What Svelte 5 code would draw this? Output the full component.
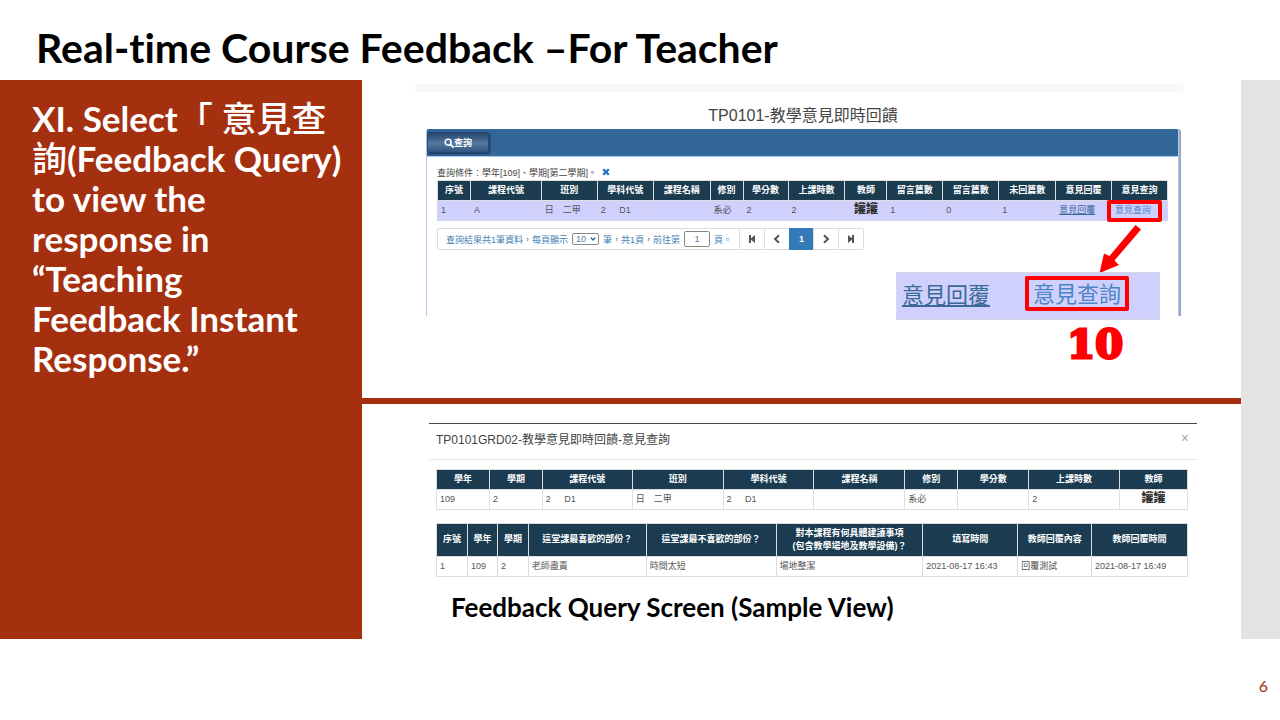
<script>
  const courseCols = [33, 71, 56, 56, 57, 33, 45, 57, 42, 56, 56, 57, 56, 56];
  const courseHeads = ['序號', '課程代號', '班別', '學科代號', '課程名稱', '修別', '學分數', '上課時數', '教師', '留言篇數', '留言篇數', '未回篇數', '意見回覆', '意見查詢'];
  const courseRow = ['1', 'A', '日\u3000二甲', '2\u2003\u2002D1', '', '系必', '2', '2', '讙讙', '1', '0', '1'];

  const detailCols = [53, 53, 90, 91, 91, 91, 53, 71, 91, 68];
  const detailHeads = ['學年', '學期', '課程代號', '班別', '學科代號', '課程名稱', '修別', '學分數', '上課時數', '教師'];
  const detailRow = ['109', '2', '2\u2003\u2002D1', '日\u3000二甲', '2\u2003\u2002D1', '', '系必', '', '2', '讙讙'];

  const replyCols = [31, 30, 31, 118, 130, 147, 95, 74, 96];
  const replyHeads = ['序號', '學年', '學期', '這堂課最喜歡的部份？', '這堂課最不喜歡的部份？', '對本課程有何具體建議事項\n(包含教學場地及教學設備)？', '填寫時間', '教師回覆內容', '教師回覆時間'];
  const replyRow = ['1', '109', '2', '老師盡責', '時間太短', '場地整潔', '2021-08-17 16:43', '回覆測試', '2021-08-17 16:49'];

  const total = (cols) => cols.reduce((a, b) => a + b, 0);
  let pageSize = $state('10');
  let pageNumber = $state('1');
</script>

{#snippet columns(cols)}
  <colgroup>
    {#each cols as w}<col style="width: {(w / total(cols)) * 100}%" />{/each}
  </colgroup>
{/snippet}

<div class="slide">
  <header><h1>Real-time Course Feedback –For Teacher</h1></header>

  <div class="body">
    <aside>
      <p>XI. Select<span>「 意見查</span><br /><span>詢</span>(Feedback Query)<br />to view the<br />response in<br />“Teaching<br />Feedback Instant<br />Response.”</p>
    </aside>

    <main>
      <section class="upper">
        <div class="strip"></div>
        <h2>TP0101-教學意見即時回饋</h2>
        <div class="panel">
          <div class="toolbar">
            <button class="query" type="button">
              <svg viewBox="0 0 12 12" width="10" height="10" aria-hidden="true"><circle cx="5" cy="5" r="3.6" fill="none" stroke="#fff" stroke-width="1.8" /><path d="M7.8 7.8 11 11" stroke="#fff" stroke-width="2.2" stroke-linecap="round" /></svg>查詢
            </button>
          </div>
          <div class="content">
            <div class="condition">
              <span>查詢條件：學年[109]、學期[第二學期]。</span>
              <button class="clear" type="button" aria-label="清除"><svg viewBox="0 0 8 8" width="8" height="8"><path d="M1.2 1.2 6.8 6.8M6.8 1.2 1.2 6.8" stroke="#1f6fb5" stroke-width="2.2" /></svg></button>
            </div>
            <table class="course">
              {@render columns(courseCols)}
              <thead><tr>{#each courseHeads as h}<th>{h}</th>{/each}</tr></thead>
              <tbody>
                <tr>
                  {#each courseRow as c}<td class:teacher={c === '讙讙'}>{c}</td>{/each}
                  <td><a class="reply" href="#reply">意見回覆</a></td>
                  <td class="marked"><a href="#query">意見查詢</a></td>
                </tr>
              </tbody>
            </table>
            <div class="pager">
              <div class="summary">
                <label>查詢結果共1筆資料，每頁顯示
                  <span class="select">
                    <select bind:value={pageSize}><option>10</option><option>20</option></select>
                    <svg viewBox="0 0 6 6" width="6" height="6" aria-hidden="true"><path class="line" d="M.8 1.600 3 4 5.200 1.600" /></svg>
                  </span></label>
                <label>筆，共1頁，前往第
                  <input type="text" bind:value={pageNumber} /></label>
                <span>頁。</span>
              </div>
              <button type="button" aria-label="第一頁"><svg viewBox="0 0 10 10" width="10" height="10"><path d="M2 1h2v3.200L8 1v8L4 5.800V9H2z" /></svg></button>
              <button type="button" aria-label="上一頁"><svg viewBox="0 0 10 10" width="10" height="10"><path class="line" d="M7 1.2 3 5l4 3.8" /></svg></button>
              <button type="button" class="current">1</button>
              <button type="button" aria-label="下一頁"><svg viewBox="0 0 10 10" width="10" height="10"><path class="line" d="M3 1.2 7 5 3 8.8" /></svg></button>
              <button type="button" aria-label="最後一頁"><svg viewBox="0 0 10 10" width="10" height="10"><path d="M8 1H6v3.200L2 1v8l4-3.200V9h2z" /></svg></button>
            </div>
          </div>
          <svg class="arrow" viewBox="0 0 44 50" width="44" height="50" aria-hidden="true"><path d="M37.500 0 43 4.500 16.500 35.500 21 40 1.500 48 6 28.500 11.500 31z" fill="#f00" /></svg>
          <div class="callout">
            <a class="reply" href="#reply">意見回覆</a>
            <div><a class="boxed" href="#query">意見查詢</a></div>
          </div>
          <strong class="step">10</strong>
        </div>
      </section>

      <section class="lower">
        <div class="dialog">
          <div class="dialog-head">
            <h3>TP0101GRD02-教學意見即時回饋-意見查詢</h3>
            <button type="button" aria-label="關閉">×</button>
          </div>
          <div class="dialog-body">
            <table>
              {@render columns(detailCols)}
              <thead><tr>{#each detailHeads as h}<th>{h}</th>{/each}</tr></thead>
              <tbody><tr>{#each detailRow as c}<td class:teacher={c === '讙讙'}>{c}</td>{/each}</tr></tbody>
            </table>
            <table class="replies">
              {@render columns(replyCols)}
              <thead><tr>{#each replyHeads as h}<th>{h}</th>{/each}</tr></thead>
              <tbody><tr>{#each replyRow as c}<td>{c}</td>{/each}</tr></tbody>
            </table>
          </div>
        </div>
        <p class="caption">Feedback Query Screen (Sample View)</p>
      </section>
    </main>

    <div class="edge"></div>
  </div>

  <footer>6</footer>
</div>

<style>
  :global(body) { margin: 0; background: #fff; }
  .slide {
    min-height: 100vh;
    display: flex;
    flex-direction: column;
    color: #000;
    font-family: Lato, "Noto Sans CJK TC", sans-serif;
    font-variant-ligatures: none;
  }
  header { padding: 20px 36px 0; height: 60px; }
  h1 { margin: 0; font-size: 41px; line-height: 56px; font-weight: 700; white-space: nowrap; }
  .body { flex: 1; display: grid; grid-template-columns: 362fr 879fr 39fr; }
  aside { background: #a53010; color: #fff; padding: 18px 0 0 32px; }
  aside p { margin: 0; font-size: 35px; line-height: 40px; font-weight: 700; white-space: nowrap; }
  aside span { font-weight: 500; }
  .edge { background: #e3e3e3; }
  footer { height: 81px; box-sizing: border-box; padding: 37px 12px 0; text-align: right; color: #a53010; font-size: 16px; line-height: 20px; }
  main { min-width: 0; font-family: "Liberation Sans", "Noto Sans CJK TC", sans-serif; }
  button, select, input { font: inherit; }

  .upper { height: 314px; border-bottom: 6px solid #a53010; padding: 4px 58px 0 53px; position: relative; }
  .strip { height: 8px; background: #f8f8f8; }
  h2 { margin: 12px 0 2px; font-size: 16px; line-height: 23px; font-weight: 400; color: #444; text-align: center; padding-left: 8px; }
  .panel {
    position: relative;
    height: 187px;
    box-sizing: border-box;
    margin: 0 4px 0 11px;
    border: 1px solid #a9cdf0;
    border-top-color: #336699;
    border-bottom: 0;
    border-radius: 3px 3px 0 0;
    box-shadow: 2px 0 0 #a3a3c4;
  }
  .toolbar { height: 27px; box-sizing: border-box; padding-top: 2px; background: #336699; border-bottom: 1px solid #a9cdf0; }
  .query {
    display: flex; align-items: center; justify-content: center;
    width: 62px; height: 21px; padding: 0;
    border: 1px solid #264a73; border-radius: 2px;
    background: linear-gradient(#26456c, #54799f 55%, #2f5480);
    box-shadow: 1px 1px 2px #1c3658;
    color: #fff; font-size: 9px; font-weight: 700;
  }
  .content { padding: 7px 10px 0 10px; }
  .condition { display: flex; align-items: center; gap: 5px; height: 16px; font-size: 9px; color: #444; white-space: nowrap; }
  .clear { display: flex; padding: 0; border: 0; background: none; }
  table { width: 100%; table-layout: fixed; border-collapse: collapse; font-size: 9px; line-height: 14px; color: #555; }
  th, td { border: 1px solid #ddd; padding: 2px 3px 3px; height: 14px; white-space: pre; font-weight: 400; text-align: left; }
  th { background: #1a3b50; color: #fff; font-weight: 700; text-align: center; padding: 2px 0 3px; }
  .course td { background: #d0d0ff; border-color: #d4d4e8; }
  td.teacher { font-weight: 900; font-size: 12px; color: #333; text-align: center; vertical-align: top; padding: 2px 0 0; line-height: 12px; }
  a { color: #4a86c5; text-decoration: none; }
  a.reply { color: #3c6a96; text-decoration: underline; }
  .marked { position: relative; }
  .marked::after { content: ""; position: absolute; inset: -1px 5px -2px -5px; border: 4px solid #f00; border-radius: 2px; }

  .pager { display: inline-flex; margin-top: 7px; height: 22px; border: 1px solid #ddd; border-radius: 2px; box-sizing: border-box; color: #4581b5; font-size: 9px; }
  .summary { display: flex; align-items: center; gap: 4px; width: 301px; box-sizing: border-box; padding-left: 8px; white-space: nowrap; }
  .summary label { display: flex; align-items: center; gap: 4px; }
  .select { position: relative; display: flex; }
  .select svg { position: absolute; right: 3px; top: 3px; pointer-events: none; }
  select { appearance: none; width: 27px; height: 12px; box-sizing: border-box; padding: 0 0 0 3px; border: 1px solid #888; border-radius: 2px; background: #fff; color: #4581b5; line-height: 10px; }
  input { width: 26px; height: 16px; box-sizing: border-box; padding: 0; border: 1px solid #888; border-radius: 2px; text-align: center; color: #4581b5; }
  .pager button { display: flex; align-items: center; justify-content: center; width: 25px; padding: 0; border: 0; border-left: 1px solid #ddd; background: #fff; }
  .pager .current { width: 24px; margin: -1px 0; background: #337ab7; border-color: #337ab7; color: #fff; font-weight: 700; }
  .pager path { fill: #555; }
  .pager path.line { fill: none; stroke: #555; stroke-width: 2; }
  .pager .select path.line { stroke: #2b6294; stroke-width: 1.4; }

  .arrow { position: absolute; right: 36px; top: 95px; }
  .callout {
    position: absolute; right: 18px; top: 142px;
    display: grid; grid-template-columns: 129px 1fr; align-items: center;
    width: 264px; height: 48px; box-sizing: border-box;
    border: 1px solid #d8d8e4; background: #d0d0ff;
    font-size: 22px; line-height: 28px;
  }
  .callout > a { padding-left: 5px; }
  .callout > div { height: 100%; border-left: 1px solid #d8d8e4; box-sizing: border-box; padding-top: 3px; }
  .boxed { display: block; width: 104px; height: 35px; box-sizing: border-box; margin-left: -2px; border: 4px solid #f00; border-radius: 2px; line-height: 29px; text-align: center; }
  .step { position: absolute; right: 55px; top: 192px; font: 700 40px/44px "DejaVu Serif", serif; color: #f00; -webkit-text-stroke: 3px #f00; }

  .lower { padding: 19px 44px 0 67px; }
  .dialog { border-top: 1px solid #444; }
  .dialog-head { display: flex; justify-content: space-between; height: 35px; border-bottom: 1px solid #e5e5e5; padding: 0 8px 0 7px; color: #444; }
  h3 { margin: 0; font-size: 12px; line-height: 33px; font-weight: 400; white-space: nowrap; }
  .dialog-head button { height: 28px; padding: 0; border: 0; background: none; color: #aaa; font-size: 14px; line-height: 28px; }
  .dialog-body { padding: 9px 9px 0 7px; }
  .replies { margin-top: 13px; }
  .replies th { height: 27px; line-height: 13px; }
  .caption { margin: 14px 0 0 22px; font: 700 26px/32px Lato, sans-serif; white-space: nowrap; }
</style>
